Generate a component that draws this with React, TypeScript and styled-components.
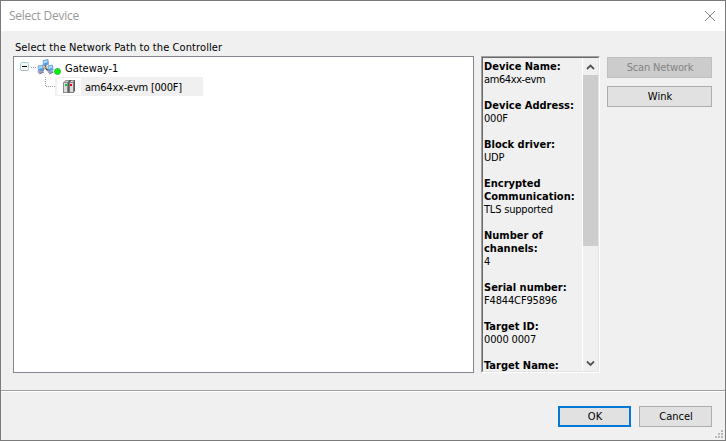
import React from 'react';
import styled, { createGlobalStyle } from 'styled-components';

const Global = createGlobalStyle`
  * { box-sizing: border-box; }
  body { margin: 0; background: #7b7b7b; overflow: hidden; }
`;

const Dialog = styled.div`
  width: 726px;
  height: 441px;
  border: 1px solid #7b7b7b;
  background: #f0f0f0;
  color: #000;
  display: flex;
  flex-direction: column;
  position: relative;
  font: 11px/14px 'DejaVu Sans Condensed', 'DejaVu Sans', sans-serif;
  font-stretch: condensed;
  white-space: nowrap;
`;

const TitleBar = styled.header`
  height: 30px;
  flex: none;
  background: #fff;
  color: #999;
  display: flex;
  align-items: center;
  justify-content: space-between;
  padding: 0 9px 0 8px;
  font: 12px/16px 'Open Sans', sans-serif;
`;

const Content = styled.main`
  height: 359px;
  flex: none;
  display: flex;
  padding: 9px 12px 0;
`;

const TreeColumn = styled.section`
  width: 461px;
  margin-right: 7px;
`;

const Label = styled.div<{ $track?: number }>`
  letter-spacing: ${p => p.$track ?? 0}px;
`;

const NodeLabel = styled(Label)`
  padding-top: 2px;
`;

const Caption = styled(Label)`
  height: 16px;
  padding-left: 2px;
  line-height: 15px;
`;

const Tree = styled.div`
  height: 317px;
  border: 1px solid #828790;
  background: #fff;
  padding: 1px 0 0 6px;
`;

const TreeRow = styled.div<{ $indent?: number }>`
  height: 19px;
  display: flex;
  align-items: center;
  padding-left: ${p => p.$indent ?? 0}px;
`;

const Selected = styled.div`
  width: 148px;
  height: 19px;
  background: #f0f0f0;
  display: flex;
  align-items: center;
  padding-left: 2px;
`;

const DeviceTile = styled.div`
  width: 24px;
  height: 17px;
  margin-right: 4px;
  background: #fff;
  display: flex;
  justify-content: center;
`;

const Info = styled.aside`
  width: 119px;
  height: 317px;
  margin: 16px 7px 0 0;
  display: flex;
  border: 1px solid;
  border-color: #a0a0a0 #fff #fff #a0a0a0;
`;

const InfoInner = styled.div`
  flex: 1;
  display: flex;
  overflow: hidden;
  border: 1px solid;
  border-color: #696969 #e3e3e3 #e3e3e3 #696969;
`;

const InfoText = styled.dl`
  width: 99px;
  margin: 0;
  padding: 2px 0 0 1px;
  line-height: 13px;
  flex: none;
`;

const Term = styled.dt`
  font-weight: bold;
`;

const Value = styled.dd<{ $track?: number }>`
  margin: 0 0 13px;
  letter-spacing: ${p => p.$track ?? 0}px;
`;

const ScrollBar = styled.div`
  width: 16px;
  display: flex;
  flex-direction: column;
  border-left: 1px solid #fff;
  flex: none;
`;

const ScrollArrow = styled.div`
  height: 17px;
  padding-top: 2px;
  display: flex;
  align-items: center;
  justify-content: center;
`;

const ScrollTrack = styled.div`
  flex: 1;
`;

const ScrollThumb = styled.div`
  height: 171px;
  background: #cdcdcd;
`;

const Actions = styled.div`
  display: flex;
  flex-direction: column;
  gap: 8px;
  padding-top: 17px;
`;

const Button = styled.button<{ $w: number; $primary?: boolean; $track?: number }>`
  width: ${p => p.$w}px;
  height: 21px;
  padding: 0 0 0 1px;
  flex: none;
  border: ${p => (p.$primary ? '2px solid #0078d7' : '1px solid #adadad')};
  background: #e1e1e1;
  color: #000;
  font: inherit;
  line-height: 14px;
  letter-spacing: ${p => p.$track ?? 0}px;
  &:disabled { border-color: #bfbfbf; background: #ccc; color: #838383; }
`;

const Footer = styled.footer`
  flex: 1;
  border-top: 1px solid #a0a0a0;
  box-shadow: inset 0 1px #fff;
  display: flex;
  justify-content: flex-end;
  gap: 8px;
  padding: 15px 13px 0 0;
`;

const Grip = styled.svg`
  position: absolute;
  right: 2px;
  bottom: 2px;
`;

const entries: { term: string[]; value: string; track: number }[] = [
  { term: ['Device Name:'], value: 'am64xx-evm', track: -0.4 },
  { term: ['Device Address:'], value: '000F', track: -0.2 },
  { term: ['Block driver:'], value: 'UDP', track: -0.2 },
  { term: ['Encrypted', 'Communication:'], value: 'TLS supported', track: -0.2 },
  { term: ['Number of', 'channels:'], value: '4', track: 0 },
  { term: ['Serial number:'], value: 'F4844CF95896', track: -0.15 },
  { term: ['Target ID:'], value: '0000 0007', track: -0.15 },
  { term: ['Target Name:'], value: '', track: 0 },
];

const GatewayIcon = () => (
  <svg width="45" height="19" viewBox="0 0 45 19">
    <rect x="0.5" y="4.5" width="8" height="8" rx="1" fill="#f3f6f6" stroke="#9fd0d4" />
    <path d="M1.5 12.5h6" stroke="#b4b4b4" />
    <path d="M2 8.5h5" stroke="#000" />
    <path d="M11 9.5h5" stroke="#999" strokeDasharray="1 1" />
    <path d="M25.5 7v4M24 11l-3 2M26 11l4 2" stroke="#333c50" strokeWidth="1.6" fill="none" />
    <path d="M23 2.5l5-1 .5 5-5 1z" fill="#4d9ce8" stroke="#7b95c4" strokeWidth=".8" />
    <path d="M23.5 3l4-1v2.5l-4 1z" fill="#a4dcff" />
    <path d="M18 8l5-1 .5 5-5 1z" fill="#4d9ce8" stroke="#7b95c4" strokeWidth=".8" />
    <path d="M18.5 8.5l4-1V10l-4 1z" fill="#a4dcff" />
    <path d="M28 8l4.5-1 .5 5-5 1z" fill="#4d9ce8" stroke="#7b95c4" strokeWidth=".8" />
    <path d="M28.5 8.5l3.5-1V10l-3.5 1z" fill="#a4dcff" />
    <path d="M17 13.5l5-1 2 1.5-4.5 2zM27 13.5l5-1 1.5 1.5-4 2z" fill="#9aa0bd" />
    <path d="M19.5 16l4.5-2M29.5 16l4-2" stroke="#59607f" strokeWidth=".8" />
    <rect x="24.5" y="8.5" width="2" height="2" fill="#d5a237" />
    <circle cx="37.5" cy="13.5" r="3" fill="#00fa00" stroke="#2dab3f" strokeWidth=".9" />
  </svg>
);

const ServerIcon = () => (
  <svg width="16" height="17" viewBox="0 0 16 17">
    <path d="M2 5l3-3h9v11l-2 2H2z" fill="#5a5a5a" />
    <path d="M3 4.5L5.5 2.5H8L6.5 4.5zM8.5 4.5L10.5 2.5H13L12 4.5z" fill="#d4d4d4" />
    <path d="M2.5 4.5H6.5v10h-4z" fill="#dadada" stroke="#888" strokeWidth=".8" />
    <path d="M8.5 4.5H12.5v10h-4z" fill="#dadada" stroke="#777" strokeWidth=".8" />
    <rect x="4" y="6" width="2" height="2" fill="#00c828" />
    <rect x="9" y="6" width="2" height="2" fill="#e80018" />
  </svg>
);

export default function App() {
  return (
    <>
      <Global />
      <Dialog>
        <TitleBar>
          <Label $track={-0.25}>Select Device</Label>
          <svg width="12" height="12" viewBox="0 0 12 12">
            <path d="M1 1l10 10M11 1L1 11" stroke="#868686" />
          </svg>
        </TitleBar>
        <Content>
          <TreeColumn>
            <Caption $track={0.09}>Select the Network Path to the Controller</Caption>
            <Tree>
              <TreeRow>
                <GatewayIcon />
                <NodeLabel>Gateway-1</NodeLabel>
              </TreeRow>
              <TreeRow $indent={25}>
                <svg width="10" height="19" viewBox="0 0 10 19">
                  <path d="M.5 0v9.5H10" fill="none" stroke="#999" strokeDasharray="1 1" />
                </svg>
                <Selected>
                  <DeviceTile><ServerIcon /></DeviceTile>
                  <NodeLabel $track={-0.22}>am64xx-evm [000F]</NodeLabel>
                </Selected>
              </TreeRow>
            </Tree>
          </TreeColumn>
          <Info>
            <InfoInner>
              <InfoText>
                {entries.map((e, i) => (
                  <React.Fragment key={i}>
                    {e.term.map(text => <Term key={text}>{text}</Term>)}
                    <Value $track={e.track}>{e.value}</Value>
                  </React.Fragment>
                ))}
              </InfoText>
              <ScrollBar>
                <ScrollArrow>
                  <svg width="9" height="7" viewBox="0 0 9 7"><path d="M1 5l3.5-3.5L8 5" fill="none" stroke="#555" strokeWidth="1.8" /></svg>
                </ScrollArrow>
                <ScrollTrack><ScrollThumb /></ScrollTrack>
                <ScrollArrow>
                  <svg width="9" height="7" viewBox="0 0 9 7"><path d="M1 1.5L4.5 5 8 1.5" fill="none" stroke="#555" strokeWidth="1.8" /></svg>
                </ScrollArrow>
              </ScrollBar>
            </InfoInner>
          </Info>
          <Actions>
            <Button $w={105} $track={-0.15} disabled>Scan Network</Button>
            <Button $w={105}>Wink</Button>
          </Actions>
        </Content>
        <Footer>
          <Button $w={73} $primary>OK</Button>
          <Button $w={73}>Cancel</Button>
        </Footer>
        <Grip width="8" height="8" viewBox="0 0 8 8">
          <path d="M6 0h2v2H6zM3 3h2v2H3zM6 3h2v2H6zM0 6h2v2H0zM3 6h2v2H3zM6 6h2v2H6z" fill="#b8b8b8" />
        </Grip>
      </Dialog>
    </>
  );
}
